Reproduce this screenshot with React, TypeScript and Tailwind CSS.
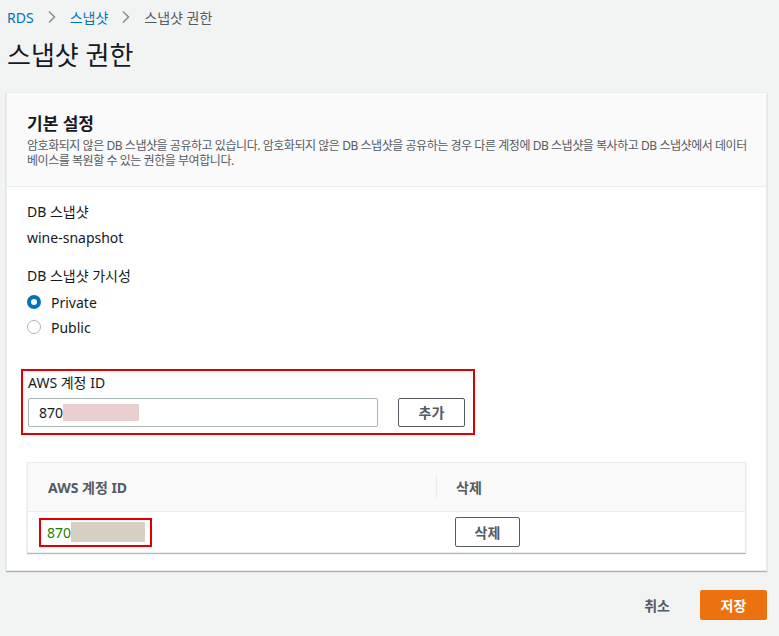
import React from 'react'

const font = { fontFamily: '"Noto Sans", "Noto Sans CJK KR", sans-serif' }

function Chevron() {
  return (
    <svg width="10" height="14" viewBox="0 0 10 14" className="mx-[13px]">
      <path d="M2 1.5l5.5 5.5L2 12.5" fill="none" stroke="#879596" strokeWidth="1.6" />
    </svg>
  )
}

function Radio({ checked }: { checked: boolean }) {
  return checked ? (
    <span className="w-[14px] h-[14px] rounded-full border-[4px] border-[#0073bb] bg-white" />
  ) : (
    <span className="w-[14px] h-[14px] rounded-full border border-[#aab7b8] bg-white" />
  )
}

export default function App() {
  return (
    <div className="w-[779px] h-[636px] bg-[#f2f3f3] text-[#16191f] overflow-hidden" style={font}>
      <div className="px-[7px] pt-[6px]">
        <div className="flex items-center h-[22px] text-[14px]">
          <span className="text-[#0073bb]">RDS</span>
          <Chevron />
          <span className="text-[#0073bb]">스냅샷</span>
          <Chevron />
          <span className="text-[#545b64]">스냅샷 권한</span>
        </div>
        <h1 className="text-[26px] leading-[36px] mt-[9px] font-normal">스냅샷 권한</h1>
      </div>

      <div className="mx-[6px] mt-[19px] w-[761px] bg-white border border-[#eaeded] shadow-[0_1px_1px_0_rgba(0,28,36,0.3)]">
        <div className="bg-[#fafafa] border-b border-[#eaeded] px-[20px] pt-[19px] pb-[18px]">
          <h2 className="text-[17px] leading-[24px] font-bold">기본 설정</h2>
          <div className="text-[12px] leading-[15px] text-[#545b64] mt-[2px] whitespace-nowrap tracking-[-0.45px]">
            <div>
              암호화되지 않은 DB 스냅샷을 공유하고 있습니다. 암호화되지 않은 DB 스냅샷을 공유하는 경우 다른 계정에 DB 스냅샷을 복사하고 DB 스냅샷에서 데이터
            </div>
            <div>베이스를 복원할 수 있는 권한을 부여합니다.</div>
          </div>
        </div>

        <div className="px-[20px] pt-[15px] pb-[17px] text-[14px]">
          <div className="leading-[20px]">DB 스냅샷</div>
          <div className="leading-[20px] mt-[6px]">wine-snapshot</div>

          <div className="leading-[20px] mt-[18px]">DB 스냅샷 가시성</div>
          <div className="flex items-center gap-[10px] mt-[6px] h-[20px]">
            <Radio checked />
            <span>Private</span>
          </div>
          <div className="flex items-center gap-[10px] mt-[5px] h-[20px]">
            <Radio checked={false} />
            <span>Public</span>
          </div>

          <div className="mt-[32px] -ml-[6px] w-[454px] border-2 border-[#e00000] px-[5px] pt-[2px] pb-[6px]">
            <div className="leading-[20px]">AWS 계정 ID</div>
            <div className="flex items-center mt-[5px]">
              <div className="w-[350px] h-[29px] border border-[#aab7b8] rounded-[2px] flex items-center pl-[10px]">
                <span>870</span>
                <span className="w-[76px] h-[17px] bg-[#e9cfd0]" />
              </div>
              <button className="ml-[20px] w-[67px] h-[29px] border border-[#545b64] rounded-[2px] text-[#545b64] font-bold text-[14px] bg-white">
                추가
              </button>
            </div>
          </div>

          <div className="mt-[27px] border border-[#eaeded] shadow-[0_1px_1px_0_rgba(0,28,36,0.3)]">
            <div className="flex h-[49px] bg-[#fafafa] border-b border-[#eaeded] items-center text-[#545b64] font-bold">
              <div className="w-[408px] pl-[20px]">AWS 계정 ID</div>
              <div className="h-[24px] w-px bg-[#eaeded]" />
              <div className="pl-[19px]">삭제</div>
            </div>
            <div className="flex h-[40px] items-center">
              <div className="w-[408px] pl-[11px]">
                <div className="w-[113px] h-[29px] border-2 border-[#e00000] flex items-center pl-[6px]">
                  <span className="text-[#1d8102]">870</span>
                  <span className="w-[74px] h-[20px] bg-[#d8cfc3]" />
                </div>
              </div>
              <div className="pl-[19px]">
                <button className="w-[65px] h-[30px] border border-[#545b64] rounded-[2px] text-[#545b64] font-bold text-[14px] bg-white">
                  삭제
                </button>
              </div>
            </div>
          </div>
        </div>
      </div>

      <div className="flex justify-end items-center mt-[19px] w-[767px]">
        <button className="text-[14px] font-bold text-[#545b64] mr-[30px]">취소</button>
        <button className="w-[67px] h-[30px] bg-[#ec7211] rounded-[2px] text-white font-bold text-[14px]">저장</button>
      </div>
    </div>
  )
}
